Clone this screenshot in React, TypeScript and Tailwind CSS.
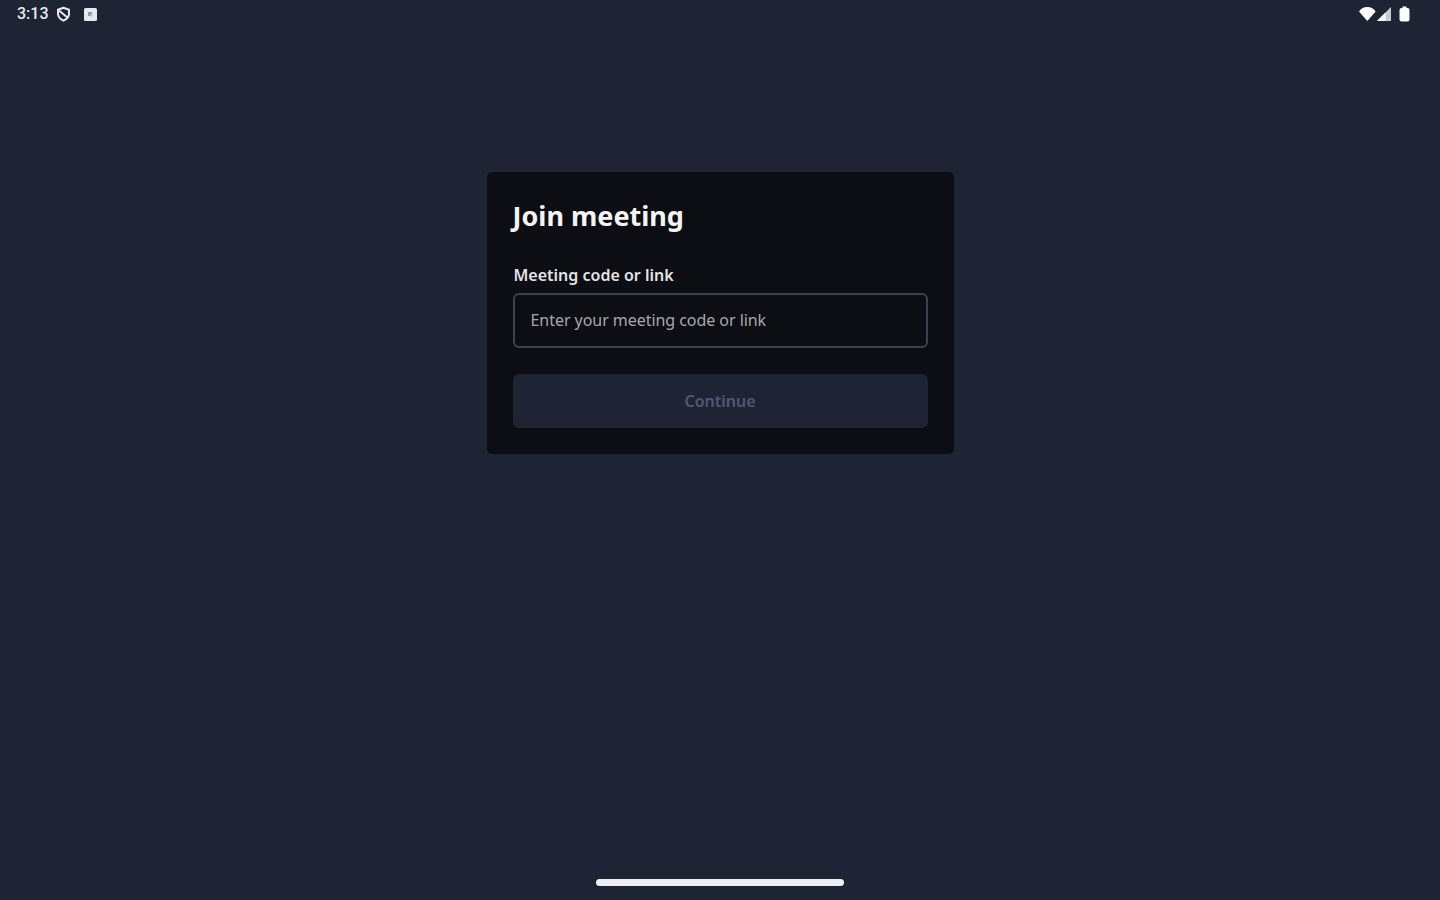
import { useState } from "react";

function StatusBar() {
  return (
    <header className="flex h-7 items-center justify-between pl-[17px] pr-[30px] text-[#e8e9ec]">
      <div className="flex items-center">
        <span className="w-8 font-['Roboto',sans-serif] text-base leading-7 font-medium">
          3:13
        </span>
        <svg className="ml-[7px] h-4 w-[15px]" viewBox="0 0 15 16" fill="none">
          <path
            d="M7.5 1.800 13 3.800v4c0 3.200-2.200 5.400-5.500 6.900C4.200 13.200 2 11 2 7.800v-4Z"
            stroke="currentColor"
            strokeWidth="2"
            strokeLinejoin="round"
          />
          <path d="M3 4.500 12 12" stroke="currentColor" strokeWidth="2" />
        </svg>
        <svg className="ml-[13px] h-[13px] w-[13px]" viewBox="0 0 13 13">
          <rect width="13" height="13" rx="1.5" fill="currentColor" />
          <path d="M5 8V5h3" stroke="#777b85" strokeWidth="1.5" fill="none" />
          <rect x="6.500" y="6.500" width="2" height="2" fill="#a4a7af" />
        </svg>
      </div>
      <div className="flex items-center text-white">
        <svg className="h-4 w-[19px]" viewBox="0 0 19 16" fill="currentColor">
          <path d="M1 5.500C3 2.300 6 1 9.300 1s6.300 1.300 8.300 4.500L9.300 15Z" />
        </svg>
        <svg className="h-4 w-[15px]" viewBox="0 0 15 16">
          <path d="M0 15 14 1v14Z" fill="#c9cad0" />
          <path d="M0 15 8.500 6.500V15Z" fill="currentColor" />
        </svg>
        <svg className="ml-[7px] h-4 w-[11px]" viewBox="0 0 11 16" fill="currentColor">
          <path d="M3.500 0.500h4V2H8.500a2 2 0 0 1 2 2v9.500a2 2 0 0 1-2 2h-6a2 2 0 0 1-2-2V4a2 2 0 0 1 2-2h1Z" />
        </svg>
      </div>
    </header>
  );
}

export default function App() {
  const [code, setCode] = useState("");

  return (
    <div className="flex h-screen flex-col bg-[#1f2435] font-['Noto_Sans',sans-serif]">
      <StatusBar />
      <main className="flex flex-1 flex-col items-center pt-36">
        <form
          className="flex h-[282px] w-[467px] flex-col rounded-[5px] bg-[#0d0e13] px-[26px] pt-[26px]"
          onSubmit={(e) => e.preventDefault()}
        >
          <h1 className="text-[27px] leading-9 font-bold text-[#f4f4f5]">
            Join meeting
          </h1>
          <label
            htmlFor="code"
            className="mt-[30px] pl-px text-base leading-[22px] font-semibold text-[#e3e3e6]"
          >
            Meeting code or link
          </label>
          <input
            id="code"
            value={code}
            onChange={(e) => setCode(e.target.value)}
            placeholder="Enter your meeting code or link"
            className="mt-[7px] h-[55px] w-full shrink-0 rounded-md border-2 border-[#3d4059] px-4 pb-0.5 text-base tracking-[-0.05px] text-white outline-none placeholder:text-[#a6a7ad]"
          />
          <button
            disabled={!code}
            className="mt-[26px] h-[54px] w-full shrink-0 rounded-md bg-[#1f2435] text-base font-semibold text-[#525775]"
          >
            Continue
          </button>
        </form>
      </main>
      <footer className="flex h-[21px] justify-center">
        <div className="h-[7px] w-[248px] rounded-full bg-[#eeeff1]" />
      </footer>
    </div>
  );
}
